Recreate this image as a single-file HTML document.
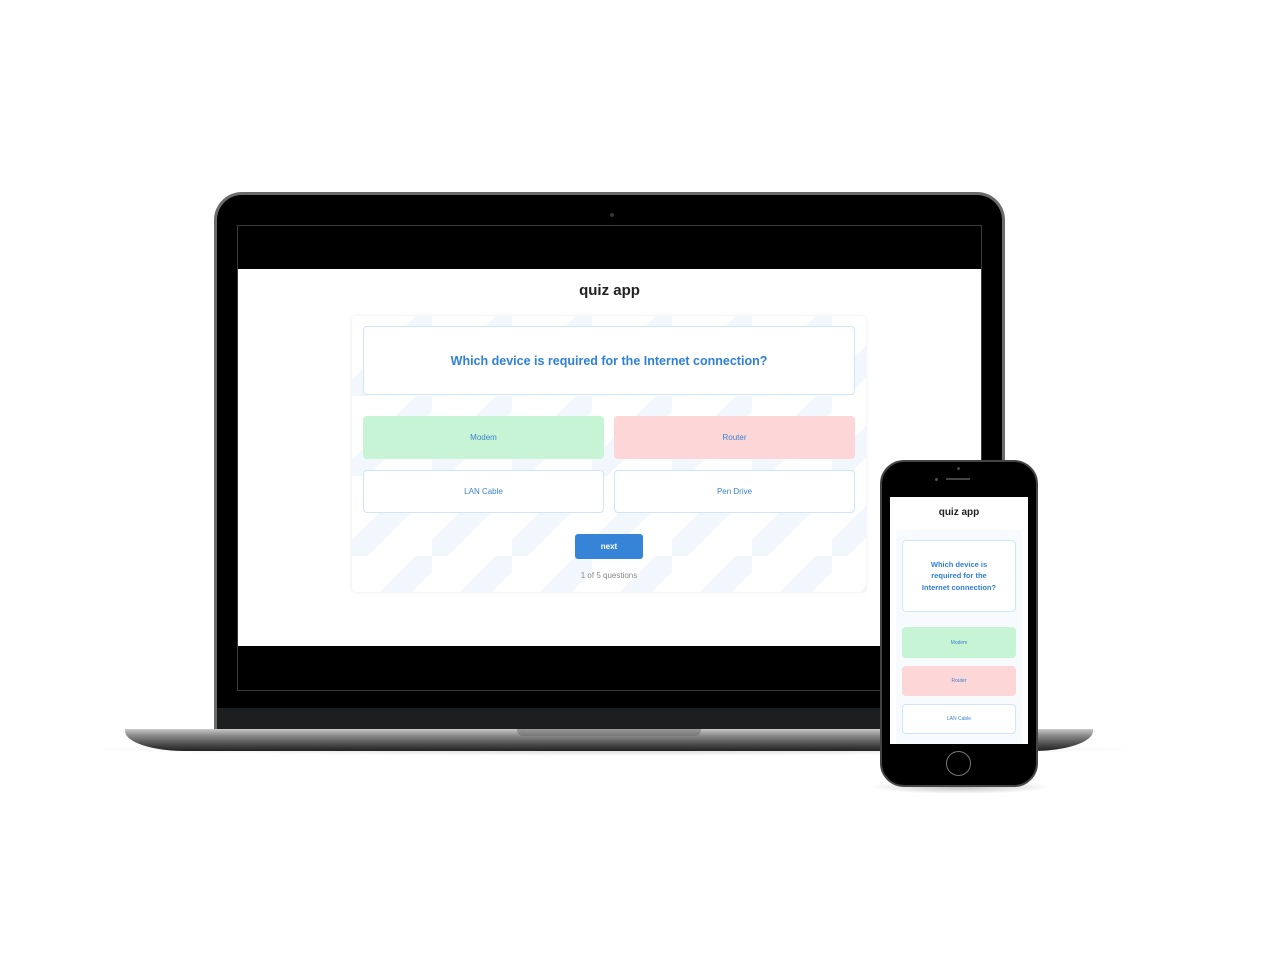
<!DOCTYPE html>
<html><head><style>
*{margin:0;padding:0;box-sizing:border-box}
body{width:1280px;height:960px;background:#fff;position:relative;overflow:hidden;font-family:"Liberation Sans",sans-serif}
.a{position:absolute}
.box{position:absolute;border:1.5px solid #cfe5fa;background:#fff;border-radius:4px;display:flex;align-items:center;justify-content:center;text-align:center;color:#3b83d0}
</style></head><body>
<div class="a" style="left:80px;top:742px;width:1070px;height:14px;border-radius:50%;background:radial-gradient(ellipse,rgba(0,0,0,.18),rgba(0,0,0,0) 70%)"></div>
<div class="a" style="left:214px;top:192px;width:791px;height:540px;border-radius:28px 28px 0 0;background:#6b6b6b;padding:3px 3px 0 3px">
 <div style="width:100%;height:100%;background:#000;border-radius:25px 25px 0 0;position:relative">
  <div class="a" style="left:393px;top:18px;width:4px;height:4px;border-radius:50%;background:#333"></div>
  <div class="a" style="left:0;top:513px;width:100%;height:24px;background:#1d1e20"></div>
 </div>
</div>
<div class="a" style="left:237px;top:225px;width:745px;height:466px;border:1px solid #3a3a3a;background:#000"></div>
<div class="a" style="left:238px;top:269px;width:743px;height:377px;background:#fff"></div>
<div class="a" style="left:238px;top:282px;width:743px;text-align:center;font-size:15px;font-weight:bold;color:#222">quiz app</div>
<div class="a" style="left:352px;top:316px;width:514px;height:276px;border-radius:4px;box-shadow:0 0 3px rgba(0,0,0,.1);background:linear-gradient(135deg,#fff 40%,#f1f7fd 40%,#f1f7fd 60%,#fff 60%);background-size:80px 80px;background-color:#f7fafd"></div>
<div class="box" style="left:363px;top:326px;width:492px;height:69px;font-size:12.5px;font-weight:bold;color:#2f80d8">Which device is required for the Internet connection?</div>
<div class="box" style="left:363px;top:416px;width:241px;height:43px;font-size:8px;background:#c6f4d5;border-color:#c6f4d5">Modem</div>
<div class="box" style="left:614px;top:416px;width:241px;height:43px;font-size:8px;background:#fdd6d8;border-color:#fdd6d8">Router</div>
<div class="box" style="left:363px;top:470px;width:241px;height:43px;font-size:8px">LAN Cable</div>
<div class="box" style="left:614px;top:470px;width:241px;height:43px;font-size:8px">Pen Drive</div>
<div class="a" style="left:575px;top:534px;width:68px;height:25px;background:#3584d8;border-radius:3px;color:#fff;font-size:8px;font-weight:bold;text-align:center;line-height:25px">next</div>
<div class="a" style="left:352px;top:571px;width:514px;text-align:center;font-size:8px;color:#888">1 of 5 questions</div>
<div class="a" style="left:125px;top:729px;width:968px;height:22px;border-radius:0 0 60px 60px/0 0 20px 20px;background:linear-gradient(#c9c9c9,#8a8a8a 30%,#4a4a4a 70%,#222)"></div>
<div class="a" style="left:517px;top:729px;width:184px;height:7px;background:linear-gradient(#9a9a9a,#777);border-radius:0 0 6px 6px"></div>
<div class="a" style="left:868px;top:780px;width:185px;height:14px;border-radius:50%;background:radial-gradient(ellipse,rgba(0,0,0,.25),rgba(0,0,0,0) 70%)"></div>
<div class="a" style="left:880px;top:460px;width:158px;height:327px;border-radius:24px;background:#000;border:2px solid #444"></div>
<div class="a" style="left:946px;top:478px;width:24px;height:2px;background:#444"></div>
<div class="a" style="left:957px;top:467px;width:3px;height:3px;border-radius:50%;background:#444"></div>
<div class="a" style="left:935px;top:478px;width:3px;height:3px;border-radius:50%;background:#555"></div>
<div class="a" style="left:890px;top:497px;width:138px;height:247px;background:#fff;overflow:hidden">
 <div class="a" style="left:0;top:10px;width:138px;text-align:center;font-size:10px;font-weight:bold;color:#222">quiz app</div>
 <div class="a" style="left:6px;top:33px;width:126px;height:220px;background:#f8fbfe"></div>
 <div class="box" style="left:12px;top:43px;width:114px;height:72px;font-size:7.5px;font-weight:bold;line-height:11.5px;color:#2f80d8;padding:0 14px">Which device is required for the Internet connection?</div>
 <div class="box" style="left:12px;top:130px;width:114px;height:31px;font-size:5px;background:#c6f4d5;border-color:#c6f4d5">Modem</div>
 <div class="box" style="left:12px;top:169px;width:114px;height:30px;font-size:5px;background:#fdd6d8;border-color:#fdd6d8">Router</div>
 <div class="box" style="left:12px;top:207px;width:114px;height:30px;font-size:5px">LAN Cable</div>
</div>
<div class="a" style="left:946px;top:751px;width:25px;height:25px;border-radius:50%;border:1.5px solid #777"></div>
</body></html>
